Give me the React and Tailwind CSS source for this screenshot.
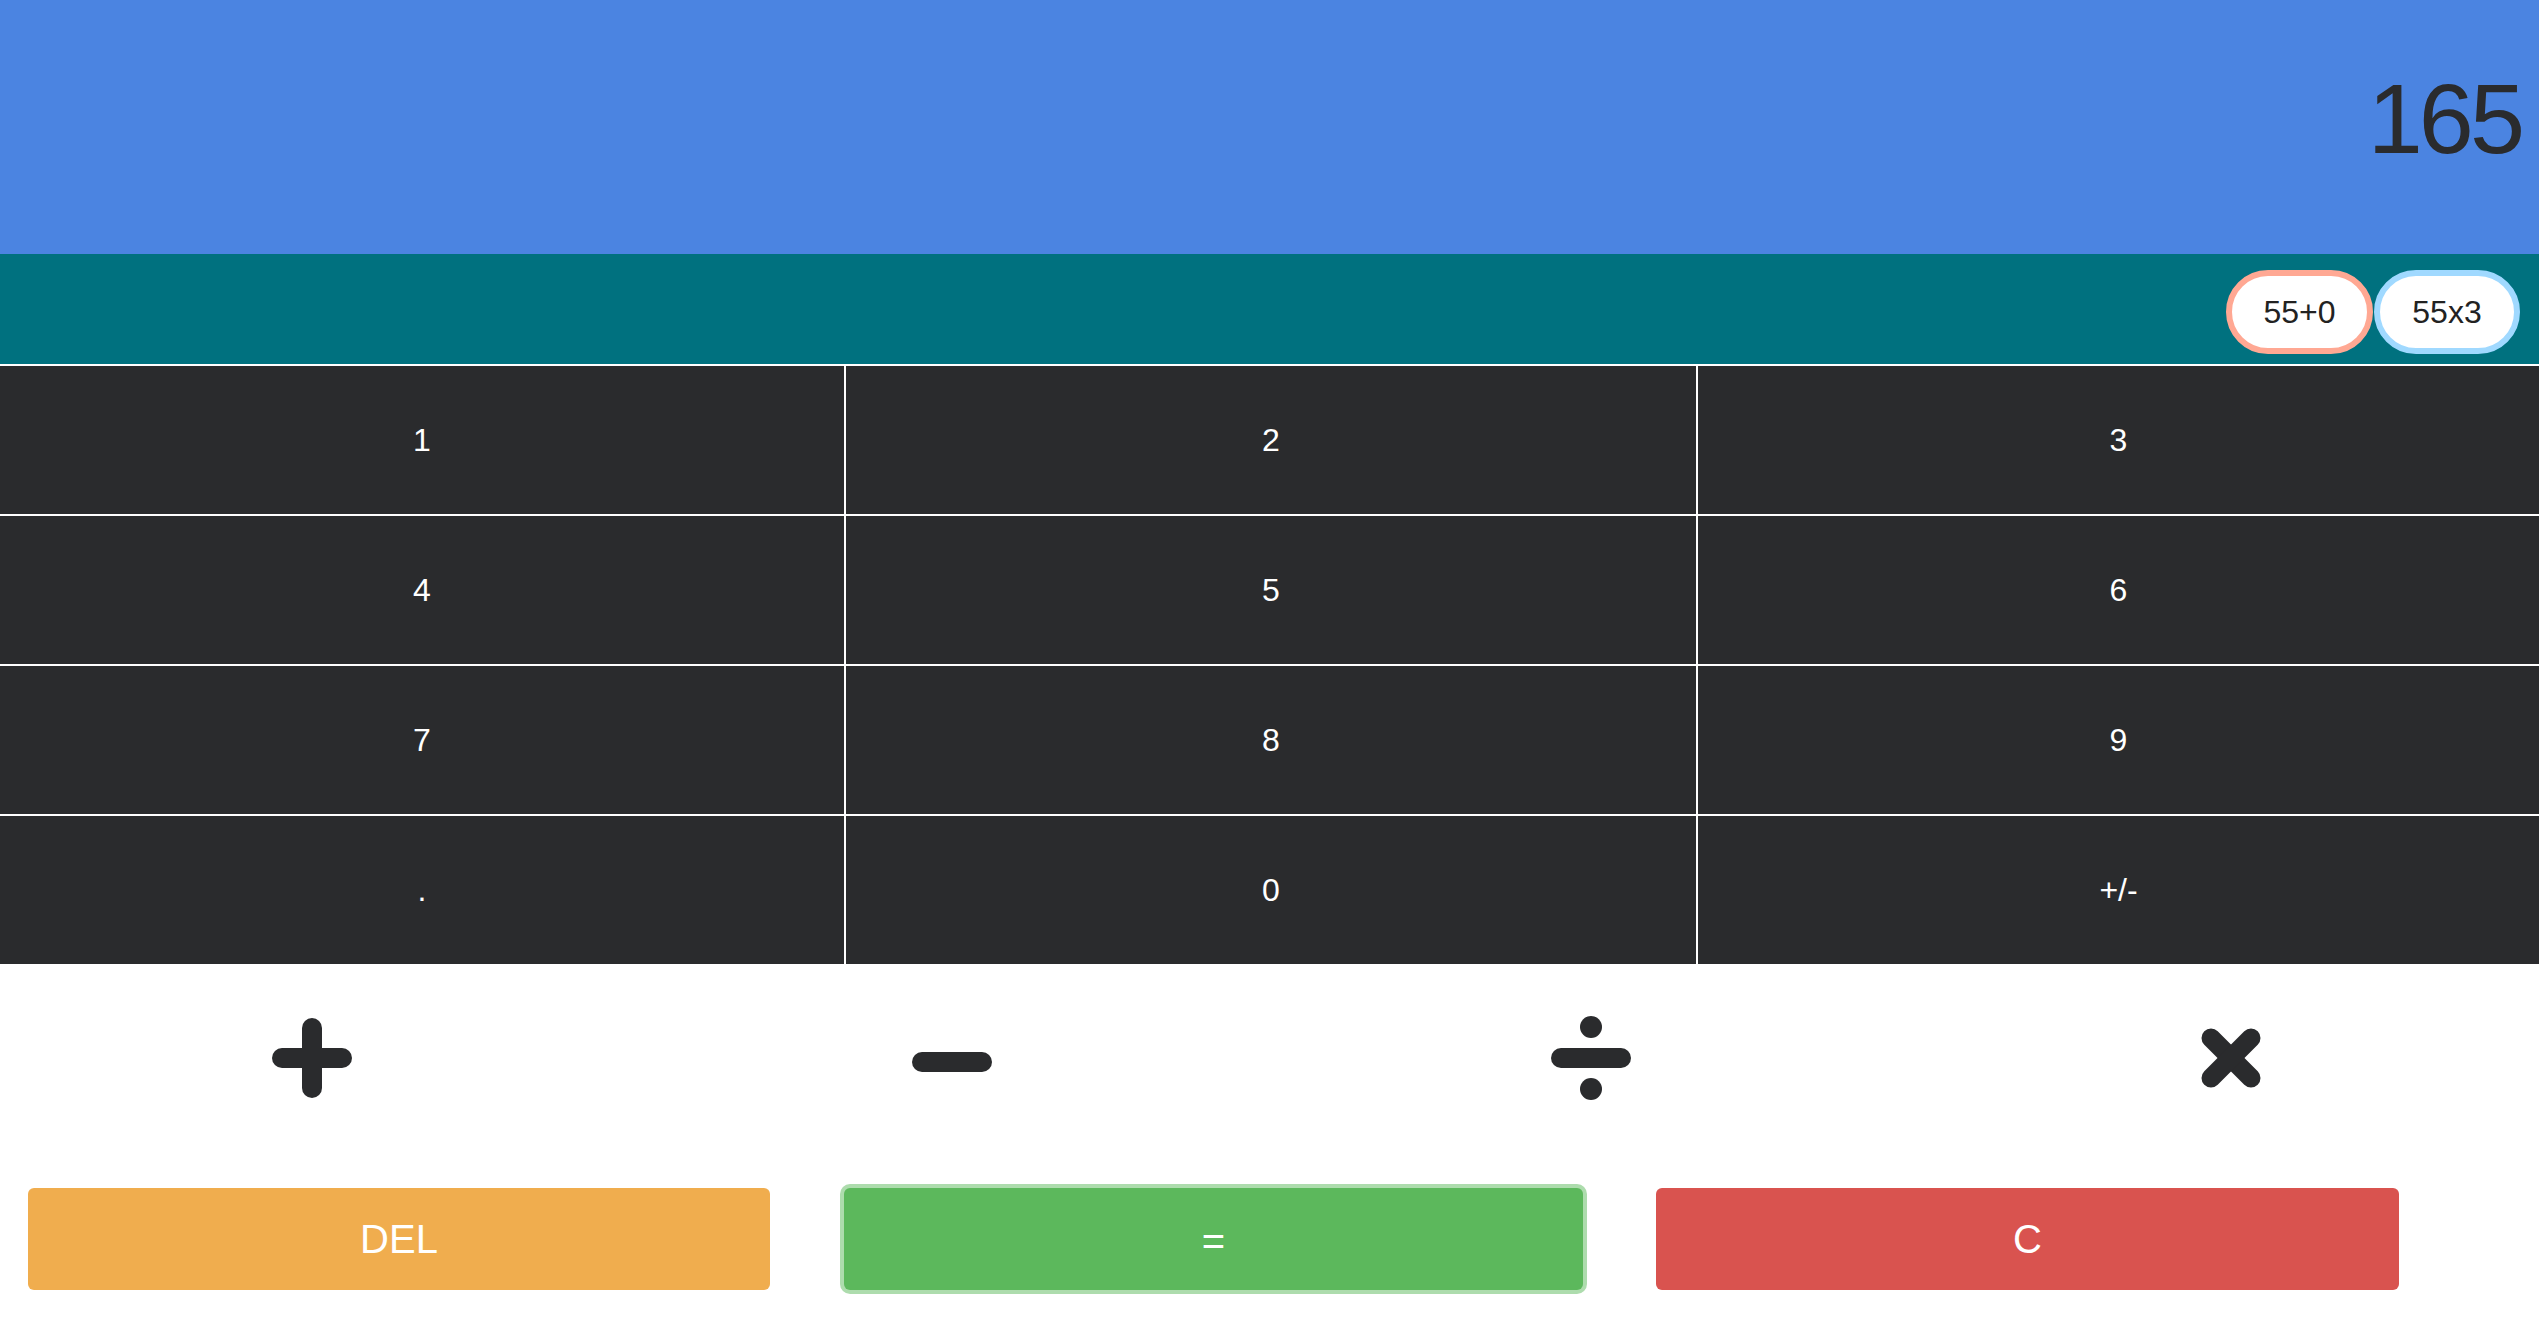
import React from 'react'

const keys = ['1', '2', '3', '4', '5', '6', '7', '8', '9', '.', '0', '+/-']

const PlusIcon = () => (
  <svg width="80" height="80" viewBox="0 0 80 80">
    <g stroke="#2a2b2d" strokeWidth="20" strokeLinecap="round">
      <line x1="10" y1="40" x2="70" y2="40" />
      <line x1="40" y1="10" x2="40" y2="70" />
    </g>
  </svg>
)

const MinusIcon = () => (
  <svg width="80" height="20" viewBox="0 0 80 20" className="mt-[8px]">
    <line x1="10" y1="10" x2="70" y2="10" stroke="#2a2b2d" strokeWidth="20" strokeLinecap="round" />
  </svg>
)

const DivideIcon = () => (
  <svg width="80" height="84" viewBox="0 0 80 84">
    <circle cx="40" cy="11" r="11" fill="#2a2b2d" />
    <line x1="10" y1="42" x2="70" y2="42" stroke="#2a2b2d" strokeWidth="20" strokeLinecap="round" />
    <circle cx="40" cy="73" r="11" fill="#2a2b2d" />
  </svg>
)

const TimesIcon = () => (
  <svg width="62" height="62" viewBox="0 0 62 62" className="ml-[18px]">
    <g stroke="#2a2b2d" strokeWidth="19" strokeLinecap="round">
      <line x1="11" y1="11" x2="51" y2="51" />
      <line x1="51" y1="11" x2="11" y2="51" />
    </g>
  </svg>
)

export default function App() {
  return (
    <div className="w-full min-h-screen bg-white font-['Liberation_Sans',Arial,sans-serif]">
      {/* display */}
      <div className="h-[254px] bg-[#4b84e1] flex justify-end pr-[18px] pt-[69px]">
        <span className="text-[99px] leading-none tracking-[-4px] text-[#2a2b2d]">165</span>
      </div>

      {/* history */}
      <div className="h-[110px] bg-[#00717f] flex justify-end items-start gap-[1px] pr-[19px] pt-[16px]">
        <button className="w-[147px] h-[84px] rounded-full bg-white border-[6px] border-[#ffa893] text-[32px] text-[#222] flex items-center justify-center">
          55+0
        </button>
        <button className="w-[146px] h-[84px] rounded-full bg-white border-[6px] border-[#a0d9ff] text-[32px] text-[#222] flex items-center justify-center">
          55x3
        </button>
      </div>

      {/* keypad */}
      <div className="grid grid-cols-[844px_850px_1fr] gap-[2px] bg-white pt-[2px]">
        {keys.map((k) => (
          <button
            key={k}
            className="h-[148px] bg-[#2a2b2d] text-white text-[32px] flex items-center justify-center"
          >
            {k}
          </button>
        ))}
      </div>

      {/* operators */}
      <div className="grid grid-cols-4 h-[188px] items-center">
        <div className="flex justify-center pr-[10px]"><PlusIcon /></div>
        <div className="flex justify-center"><MinusIcon /></div>
        <div className="flex justify-center pl-[8px]"><DivideIcon /></div>
        <div className="flex justify-center"><TimesIcon /></div>
      </div>

      {/* actions */}
      <div className="flex pl-[28px] mt-[36px]">
        <button className="w-[742px] h-[102px] rounded-[6px] bg-[#f0ad4e] text-white text-[40px]">
          DEL
        </button>
        <button className="w-[739px] h-[102px] ml-[74px] pt-[4px] rounded-[6px] bg-[#5cb85c] text-white text-[40px] shadow-[0_0_0_4px_#addcad]">
          =
        </button>
        <button className="w-[743px] h-[102px] ml-[73px] rounded-[6px] bg-[#d9534f] text-white text-[40px]">
          C
        </button>
      </div>
    </div>
  )
}
